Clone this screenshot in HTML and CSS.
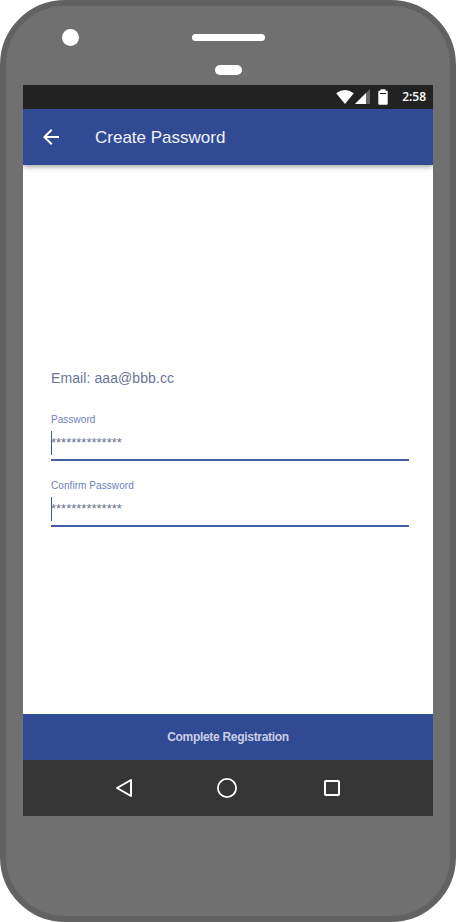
FILE: index.html
```html
<!DOCTYPE html>
<html lang="en">
<head>
<meta charset="utf-8">
<title>Create Password</title>
<link rel="stylesheet" href="styles.css">
</head>
<body>
<div class="phone">
  <div class="bezel">
    <span class="camera"></span>
    <span class="speaker"></span>
    <span class="sensor"></span>
  </div>
  <main class="screen">
    <div class="status">
      <svg class="signals" width="56" height="24" viewBox="0 0 56 24">
        <path fill="#fff" d="M.2 8.3Q9 1.7 17.8 8.3L9 19z"/>
        <path fill="#666" d="M34 4v15H19z"/>
        <path fill="#fff" d="M30 8v11H19z"/>
        <path fill="#fff" d="M44.5 4.2h5v1.6h1.4a.8.8 0 0 1 .8.8v12.2a1 1 0 0 1-1 1h-7.4a1 1 0 0 1-1-1V6.600a.8.8 0 0 1 .8-.8h1.400z"/>
        <path fill="#222" d="M44 8h6v1h-6z"/>
      </svg>
      <span class="clock">2:58</span>
    </div>
    <header class="toolbar">
      <svg width="24" height="24" viewBox="0 0 24 24"><path fill="#fff" d="M20 11H7.830l5.590-5.590L12 4l-8 8 8 8 1.410-1.410L7.830 13H20v-2z"/></svg>
      <h1 class="title">Create Password</h1>
    </header>
    <form class="content">
      <p class="email">Email: aaa@bbb.cc</p>
      <div class="field">
        <label class="label">Password</label>
        <div class="input">**************</div>
      </div>
      <div class="field">
        <label class="label">Confirm Password</label>
        <div class="input">**************</div>
      </div>
    </form>
    <div class="submit">Complete Registration</div>
    <nav class="nav">
      <svg width="24" height="24" viewBox="0 0 24 24"><path fill="none" stroke="#fff" stroke-width="2" stroke-linejoin="round" d="M19 4v16L5 12z"/></svg>
      <svg width="24" height="24" viewBox="0 0 24 24"><circle cx="11" cy="12" r="9.100" fill="none" stroke="#fff" stroke-width="1.800"/></svg>
      <svg width="24" height="24" viewBox="0 0 24 24"><rect x="5" y="5" width="14" height="14" rx=".8" fill="none" stroke="#fff" stroke-width="2"/></svg>
    </nav>
  </main>
</div>
</body>
</html>
```
FILE: styles.css
```css
* { box-sizing: border-box; }
body {
  margin: 0;
  background: #fff;
  font-family: "Liberation Sans", Arial, sans-serif;
}
svg { display: block; flex: none; }
.phone {
  width: 456px;
  height: 922px;
  padding: 0 17px;
  border: 6px solid #626262;
  border-radius: 65px;
  background: #707070;
  overflow: hidden;
}
.bezel {
  height: 79px;
  display: grid;
  grid-template-columns: 130px 1fr 130px;
  grid-template-rows: 50px 29px;
  align-items: center;
  justify-items: center;
}
.camera {
  justify-self: start;
  width: 17px;
  height: 17px;
  margin: 13px 0 0 39px;
  border-radius: 50%;
  background: #fff;
}
.speaker {
  width: 73px;
  height: 7px;
  margin: 13px 0 0 1px;
  border-radius: 3.5px;
  background: #fff;
}
.sensor {
  grid-column: 2;
  align-self: start;
  width: 27px;
  height: 10px;
  margin: 9px 0 0 1px;
  border-radius: 5px;
  background: #fff;
}
.screen {
  height: 731px;
  display: flex;
  flex-direction: column;
  background: #fff;
}
.status {
  height: 24px;
  display: flex;
  align-items: center;
  justify-content: flex-end;
  gap: 10px;
  padding-right: 7px;
  background: #222;
}
.clock {
  font: 600 12px/24px "Open Sans", "Noto Sans", sans-serif;
  color: #fff;
}
.toolbar {
  height: 56px;
  display: flex;
  align-items: center;
  gap: 32px;
  padding-left: 16px;
  background: #304a94;
  box-shadow: 0 2px 5px rgba(0, 0, 0, .35);
  clip-path: inset(0 0 -10px 0);
}
.title {
  margin: 0;
  padding-top: 2px;
  font-size: 17px;
  font-weight: 400;
  color: #f0f2f8;
}
.content {
  flex: 1;
  padding: 204px 24px 0 28px;
}
.email {
  margin: 0 0 28px;
  font-size: 14px;
  line-height: 18px;
  letter-spacing: .09px;
  color: #6a7596;
}
.field {
  height: 66px;
}
.label {
  display: block;
  height: 10px;
  font-size: 10px;
  line-height: 10px;
  letter-spacing: .07px;
  color: #6c82bd;
}
.input {
  height: 36px;
  padding-top: 6px;
  border-bottom: 2px solid #455fa5;
  font-size: 13px;
  line-height: 24px;
  color: #69738f;
  background: linear-gradient(#4058a0, #4058a0) 0 6px / 1px 24px no-repeat;
}
.submit {
  height: 46px;
  background: #304a94;
  color: #c9d0e6;
  font-size: 12px;
  font-weight: 700;
  letter-spacing: -.3px;
  line-height: 46px;
  text-align: center;
}
.nav {
  height: 56px;
  display: flex;
  align-items: center;
  justify-content: center;
  gap: 80px;
  background: #363636;
}
```
